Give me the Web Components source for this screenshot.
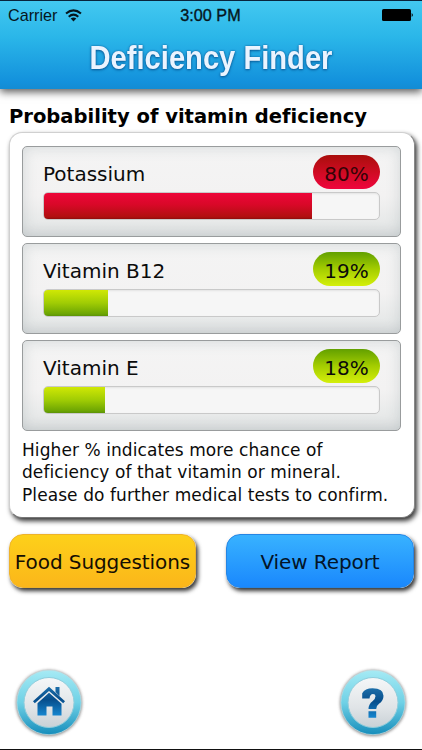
<!DOCTYPE html>
<html lang="en"><head><meta charset="utf-8"><title>Deficiency Finder</title>
<style>html,body{margin:0;height:750px;overflow:hidden;background:#fff;color:#0b0b0b;font-family:"DejaVu Sans",sans-serif;font-variant-ligatures:none}</style></head>
<body><deficiency-app></deficiency-app>
<script>
const define=(name,html,setup)=>customElements.define(name,class extends HTMLElement{
  connectedCallback(){
    if(this.shadowRoot)return;
    this.attachShadow({mode:'open'}).innerHTML=html;
    if(setup)setup(this,this.shadowRoot);
  }
});

define('status-bar',`<style>
:host{display:grid;grid-template-columns:1fr auto 1fr;align-items:center;height:26px;padding:0 9px 0 8px;font:16.2px/26px "Liberation Sans",Arial,sans-serif;color:#06161c}
.left{display:flex;align-items:center;gap:8px}.time{-webkit-text-stroke:.35px #06161c}
svg{display:block}.bat{justify-self:end}
</style><div class="left"><span>Carrier</span><svg width="17" height="13" viewBox="0 0 17 13"><g fill="none" stroke="#06161c" stroke-width="2"><path d="M1 4.6Q8.5-1.8 16 4.6"/><path d="M3.7 7.7Q8.5 3.6 13.3 7.7"/></g><path d="M5.7 9.6Q8.5 7.2 11.3 9.6L8.5 12.4Z" fill="#06161c"/></svg></div>
<span class="time">3:00 PM</span>
<svg class="bat" width="31" height="12" viewBox="0 0 31 12"><rect width="29" height="12" rx="1.6"/><path d="M29.7 4Q32 6 29.7 8Z"/></svg>`);

define('app-header',`<style>
:host{display:block;box-sizing:border-box;height:89px;border-top:1px solid #08243c;background:linear-gradient(#43c8f0,#2bb7e9 40%,#1391dc 92%,#138cd3);box-shadow:0 3px 8px rgba(0,0,0,.65);padding-top:1px}
h1{margin:11px 0 0;text-align:center;font:bold 33.5px/38px "Liberation Sans",Arial,sans-serif;color:#eaf4ff;white-space:nowrap;transform:scaleX(.87);text-shadow:0 1px 3px #075996,0 0 2px #17649e}
</style><status-bar></status-bar><h1><slot></slot></h1>`);

define('result-card',`<style>
:host{display:block;box-sizing:border-box;width:406px;height:386px;margin:0 0 0 9px;padding:13px 13px 0 12px;border:1px solid #d0d0d0;border-right-color:#888;border-bottom-color:#777;border-radius:13px;background:#fff;box-shadow:2px 3px 5px rgba(0,0,0,.8)}
.rows{display:grid;gap:6px}
p{margin:8px 0 0;font-size:17px;letter-spacing:.08px;line-height:22.3px;white-space:nowrap}
</style><div class="rows"><slot></slot></div><p><slot name="note"></slot></p>`);

define('vitamin-row',`<style>
:host{display:block;box-sizing:border-box;height:91px;padding:8px 20px 0;border:1px solid #999c9d;border-radius:5px;background:linear-gradient(#f4f4f4,#f3f2f2 55%,#e7e9e9 85%,#dcdedf);box-shadow:inset 0 0 14px rgba(140,155,158,.32)}
.top{display:flex;justify-content:space-between;height:37px;font-size:20px}
.name{line-height:38px}
.badge{box-sizing:border-box;width:67px;height:34px;border-radius:17px;text-align:center;line-height:38px;background:var(--pill)}
.track{box-sizing:border-box;height:28px;border:1px solid #c9c9c9;border-radius:5px;background:#f6f6f6;overflow:hidden;box-shadow:inset 0 1px 2px rgba(0,0,0,.08)}
.fill{height:100%;background:var(--bar)}
:host{--bar:linear-gradient(#d0e805,#a0cc04 50%,#6ca503 92%,#5b9207);--pill:linear-gradient(#62a000,#a4cd00 50%,#d4ef0a)}
:host([level=high]){--bar:linear-gradient(#ed0639,#d90828 45%,#b01010 92%,#8e0c0c);--pill:linear-gradient(#a90e0c,#ce0b22 50%,#ef053d)}
:host([level=high]) .badge{color:#340306}
</style><div class="top"><span class="name"><slot></slot></span><span class="badge"></span></div><div class="track"><div class="fill"></div></div>`,
(el,root)=>{root.querySelector('.badge').textContent=el.getAttribute('value')+'%';root.querySelector('.fill').style.width=el.getAttribute('fill')+'px';});

define('action-button',`<style>
:host{display:block}
button{display:block;box-sizing:border-box;width:100%;height:54px;padding:0;border:1px solid #eeb22a;border-radius:14px;background:linear-gradient(#fdd01a,#fbb61a);color:#140e02;font:20px/54px "DejaVu Sans",sans-serif;letter-spacing:-.08px;white-space:nowrap;box-shadow:2px 3px 4px rgba(0,0,0,.8)}
:host([kind=report]) button{border-color:#2585e4;background:linear-gradient(#38b2ff,#1a88fd);color:#031427}
</style><button><slot></slot></button>`);

define('round-button',`<style>
:host{display:block;width:70px;height:72px}svg{display:block;overflow:visible}
</style><svg width="70" height="72" viewBox="0 0 70 72"><defs>
<linearGradient id="ring" x2="0" y2="1"><stop stop-color="#a5eaf4"/><stop offset=".5" stop-color="#70d1e6"/><stop offset="1" stop-color="#168dbb"/></linearGradient>
<linearGradient id="face" x2="0" y2="1"><stop stop-color="#f5f7f8"/><stop offset=".6" stop-color="#e0e4e7"/><stop offset="1" stop-color="#c9d1d6"/></linearGradient>
<linearGradient id="ink" x2="0" y2="1"><stop stop-color="#1c6ea9"/><stop offset=".45" stop-color="#074e8c"/><stop offset="1" stop-color="#1686cf"/></linearGradient>
<filter id="soft" x="-20%" y="-20%" width="140%" height="140%"><feGaussianBlur stdDeviation="1.5"/></filter></defs>
<circle cx="35" cy="36" r="33" fill="#666" opacity=".8" filter="url(#soft)"/><circle cx="35" cy="35.5" r="32.2" fill="url(#ring)" stroke="#c2dfe5" stroke-width=".7"/>
<circle cx="35" cy="35.5" r="25" fill="url(#face)" stroke="#8fcddc" stroke-width="1"/><g class="glyph"></g></svg>`,
(el,root)=>{root.querySelector('.glyph').innerHTML=el.getAttribute('icon')==='home'
?'<path d="M41.5 20H45.5V29L41.5 25ZM35 19.7L51 34.3L49.2 36.3L35 23.9L20.8 36.3L19 34.3ZM35 25.8L47.5 36.8V48.5H38.5V39.5H32.5V48.5H23.5V36.3Z" fill="url(#ink)"/>'
:'<path d="M24.2 31.5V26.2Q27 21.2 34.5 21.2Q45.5 21.2 45.5 28.7Q45.5 33.7 41 36.7Q38.2 38.7 38.2 42H30.5Q30.5 37.2 34.5 34.2Q37.5 31.7 37.5 29.2Q37.5 27 35 27Q32 27 31.5 31.5ZM30.5 44.3H38.2V50.7H30.5Z" fill="url(#ink)"/>';});

define('deficiency-app',`<style>
:host{display:flex;flex-direction:column;box-sizing:border-box;width:422px;height:750px;border-bottom:1px solid #111;background:#fff}
h2{margin:14px 0 0 9px;height:29px;font-size:19.55px;line-height:27px;white-space:nowrap;color:#000}
.actions{display:flex;justify-content:space-between;margin:16px 8px 0 9px}
.food{width:187px}.report{width:188px}
.nav{display:flex;justify-content:space-between;margin:auto 14px 10px}
</style><app-header>Deficiency Finder</app-header><h2>Probability of vitamin deficiency</h2>
<result-card><vitamin-row level="high" value="80" fill="268">Potassium</vitamin-row><vitamin-row value="19" fill="64">Vitamin B12</vitamin-row><vitamin-row value="18" fill="61">Vitamin E</vitamin-row>
<span slot="note">Higher % indicates more chance of<br>deficiency of that vitamin or mineral.<br>Please do further medical tests to confirm.</span></result-card>
<div class="actions"><action-button class="food">Food Suggestions</action-button><action-button class="report" kind="report">View Report</action-button></div>
<div class="nav"><round-button icon="home"></round-button><round-button icon="help"></round-button></div>`);
</script></body></html>
